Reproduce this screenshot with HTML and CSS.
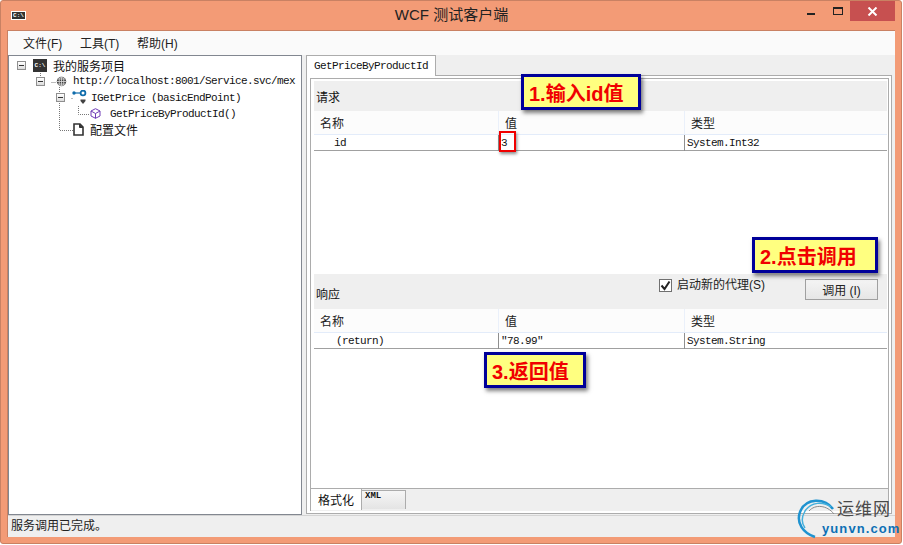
FILE: index.html
```html
<!DOCTYPE html>
<html lang="zh-CN">
<head>
    <meta charset="UTF-8">
    <meta name="viewport" content="width=device-width, initial-scale=1.0">
    <title>WCF 测试客户端</title>
    <link rel="stylesheet" href="styles.css">
</head>
<body>
    <div class="window">
        <div class="titlebar">
            <span class="app-icon">C:\</span>
            <div class="title">WCF 测试客户端</div>
            <div class="controls">
                <span class="ctl-min"></span>
                <span class="ctl-max"></span>
                <span class="ctl-close">
                    <svg width="11" height="9" viewBox="0 0 11 9"><path d="M1.5 0.5 L9.5 8.5 M9.5 0.5 L1.5 8.5" stroke="#fff" stroke-width="2"/></svg>
                </span>
            </div>
        </div>

        <div class="client">
            <div class="menubar">
                <span class="menu-item">文件(F)</span>
                <span class="menu-item">工具(T)</span>
                <span class="menu-item">帮助(H)</span>
            </div>

            <div class="main">
                <div class="tree">
                    <svg class="tree-lines" width="120" height="100" viewBox="0 0 120 100">
                        <path d="M31.5 17 V22 M42.5 26.5 H47 M50.5 31 V38 M63.5 42.5 H62 M50.5 47 V74.5 H64 M69.5 50 V58.5 H80" fill="none" stroke="#777" stroke-dasharray="1 1"/>
                    </svg>
                    <div class="tree-row row-root">
                        <span class="expander"></span>
                        <span class="console-icon">C:\</span>
                        <span class="node-label cjk">我的服务项目</span>
                    </div>
                    <div class="tree-row row-endpoint">
                        <span class="expander"></span>
                        <svg class="node-icon" width="11" height="11" viewBox="0 0 11 11">
                            <circle cx="5.5" cy="5.5" r="4.7" fill="#444"/>
                            <path d="M0.8 5.5 H10.2 M5.5 0.8 V10.2 M1.6 3 H9.4 M1.6 8 H9.4" stroke="#ddd" stroke-width="0.8" fill="none"/>
                            <ellipse cx="5.5" cy="5.5" rx="2.3" ry="4.7" stroke="#ddd" stroke-width="0.8" fill="none"/>
                        </svg>
                        <span class="node-label mono">http://localhost:8001/Service.svc/mex</span>
                    </div>
                    <div class="tree-row row-contract">
                        <span class="expander"></span>
                        <svg class="node-icon" width="15" height="15" viewBox="0 0 15 15">
                            <circle cx="2" cy="3" r="1.7" fill="#0f6cab"/>
                            <path d="M3 3 H8" stroke="#0f6cab" stroke-width="1.2"/>
                            <circle cx="11" cy="3" r="2.4" fill="none" stroke="#0f6cab" stroke-width="1.8"/>
                            <path d="M8.5 9.5 L13.5 9.5 L13.5 11 L11 14 L8.5 11 Z" fill="#424242"/>
                        </svg>
                        <span class="node-label mono">IGetPrice (basicEndPoint)</span>
                    </div>
                    <div class="tree-row row-method">
                        <svg class="node-icon" width="11" height="11" viewBox="0 0 11 11">
                            <path d="M5.5 0.7 L10 3 V8 L5.5 10.3 L1 8 V3 Z M1 3 L5.5 5.5 L10 3 M5.5 5.5 V10.3" fill="#fff" stroke="#6f3bb5" stroke-width="1"/>
                        </svg>
                        <span class="node-label mono">GetPriceByProductId()</span>
                    </div>
                    <div class="tree-row row-config">
                        <svg class="node-icon" width="11" height="13" viewBox="0 0 11 13">
                            <path d="M1 1 H7 L10 4 V12 H1 Z" fill="#fff" stroke="#333" stroke-width="1.6"/>
                            <path d="M6.5 1 V4.5 H10" fill="#333" stroke="#333"/>
                        </svg>
                        <span class="node-label cjk">配置文件</span>
                    </div>
                </div>

                <div class="detail">
                    <div class="tabstrip">
                        <div class="tab mono">GetPriceByProductId</div>
                    </div>
                    <div class="tab-panel">
                        <div class="pane">
                            <div class="pane-body">
                                <div class="section section-request">
                                    <div class="section-head head-request">请求</div>
                                    <div class="grid grid-head">
                                        <div class="cell">名称</div>
                                        <div class="cell">值</div>
                                        <div class="cell">类型</div>
                                    </div>
                                    <div class="grid grid-row">
                                        <div class="cell cell-name mono">id</div>
                                        <div class="cell cell-value mono">3<span class="value-mark"></span></div>
                                        <div class="cell cell-type mono">System.Int32</div>
                                    </div>
                                </div>
                                <div class="section">
                                    <div class="section-head head-response">
                                        <span class="response-title">响应</span>
                                        <label class="check-label">
                                            <span class="checkbox">
                                                <svg width="11" height="11" viewBox="0 0 11 11"><path d="M1.5 5.5 L4.5 9 L9.5 1.5" fill="none" stroke="#222" stroke-width="2"/></svg>
                                            </span>
                                            启动新的代理(S)
                                        </label>
                                        <button class="invoke-btn">调用 (I)</button>
                                    </div>
                                    <div class="grid grid-head">
                                        <div class="cell">名称</div>
                                        <div class="cell">值</div>
                                        <div class="cell">类型</div>
                                    </div>
                                    <div class="grid grid-row">
                                        <div class="cell cell-name cell-return mono">(return)</div>
                                        <div class="cell cell-value mono">"78.99"</div>
                                        <div class="cell cell-type mono">System.String</div>
                                    </div>
                                </div>
                            </div>
                            <div class="bottom-tabs">
                                <div class="btab btab-active">格式化</div>
                                <div class="btab btab-xml">XML</div>
                            </div>
                        </div>
                    </div>
                </div>
            </div>

            <div class="statusbar">服务调用已完成。</div>
        </div>

        <div class="note note-1">1.输入id值</div>
        <div class="note note-2">2.点击调用</div>
        <div class="note note-3">3.返回值</div>

        <div class="watermark">
            <svg class="wm-logo" width="42" height="42" viewBox="0 0 42 42">
                <path d="M36 12 C28 1 9 0 3 15 C-1 26 6 36 18 40" fill="none" stroke="#1f93d0" stroke-width="2.5"/>
                <path d="M34 10 C26 4 14 5 8 14 C4 21 5 27 8 31" fill="none" stroke="#45b0dc" stroke-width="1.5"/>
                <path d="M37 17 C30 8 18 7 12 14" fill="none" stroke="#8a8a8a" stroke-width="1"/>
            </svg>
            <div class="wm-cn">运维网</div>
            <div class="wm-en">yunvn.com</div>
        </div>
    </div>
</body>
</html>
```

FILE: styles.css
```css
* {
    margin: 0;
    padding: 0;
    box-sizing: border-box;
}

body {
    width: 903px;
    height: 545px;
    background: #ffffff;
    overflow: hidden;
    font-family: "Liberation Sans", "Noto Sans CJK SC", sans-serif;
    font-size: 12px;
    color: #111;
}

.mono {
    font-family: "Liberation Mono", "Noto Sans CJK SC", monospace;
    font-size: 11px;
    letter-spacing: -0.6px;
}

.cjk {
    font-size: 12px;
}

.window {
    position: relative;
    width: 902px;
    height: 544px;
    padding: 0 6px 6px 6px;
    background: #f39b76;
    border: 1px solid #c98163;
    border-radius: 3px;
    display: flex;
    flex-direction: column;
}

.titlebar {
    height: 29px;
    flex-shrink: 0;
    display: flex;
    align-items: flex-start;
    position: relative;
}

.app-icon {
    margin: 10px 0 0 4px;
    width: 15px;
    height: 9px;
    background: #333;
    border: 1px solid #fff;
    color: #fff;
    font: bold 6px/7px "Liberation Mono", monospace;
    text-align: center;
}

.title {
    flex: 1;
    text-align: center;
    font-size: 15px;
    line-height: 28px;
    padding-left: 70px;
    color: #222;
}

.controls {
    display: flex;
    align-items: flex-start;
}

.ctl-min {
    width: 8px;
    height: 2px;
    margin: 12px 18px 0 0;
    background: #222;
}

.ctl-max {
    width: 10px;
    height: 8px;
    margin: 6px 7px 0 0;
    border: 1px solid #222;
    border-top-width: 2px;
}

.ctl-close {
    width: 45px;
    height: 20px;
    background: #c75050;
    display: flex;
    align-items: center;
    justify-content: center;
}

.client {
    flex: 1;
    display: flex;
    flex-direction: column;
    background: #efefef;
    border-top: 1px solid #c98163;
    border-left: 1px solid #c98163;
    min-height: 0;
}

.menubar {
    height: 24px;
    flex-shrink: 0;
    background: #fafafa;
    display: flex;
    align-items: center;
    padding: 0 0 2px 15px;
    gap: 16px;
}

.menu-item {
    font-size: 12px;
    width: 41px;
    color: #222;
}

.main {
    flex: 1;
    display: flex;
    gap: 4px;
    min-height: 0;
}

.tree {
    position: relative;
    width: 294px;
    background: #fff;
    border: 1px solid #828790;
    padding-top: 1px;
}

.tree-lines {
    position: absolute;
    left: 0;
    top: 0;
}

.tree-row {
    position: relative;
    height: 16px;
    display: flex;
    align-items: center;
    white-space: nowrap;
}

.row-root { padding-left: 8px; }
.row-endpoint { padding-left: 27px; }
.row-contract { padding-left: 47px; }
.row-method { padding-left: 81px; }
.row-config { padding-left: 64px; }

.expander {
    width: 9px;
    height: 9px;
    flex-shrink: 0;
    border: 1px solid #8f8f8f;
    background: linear-gradient(#ffffff, #dcdcdc);
    position: relative;
}

.expander::after {
    content: '';
    position: absolute;
    left: 1px;
    top: 3px;
    width: 5px;
    height: 1px;
    background: #333;
}

.console-icon {
    margin-left: 7px;
    margin-right: 6px;
    width: 14px;
    height: 13px;
    background: #333;
    color: #fff;
    font: bold 6px/13px "Liberation Mono", monospace;
    text-align: center;
}

.node-icon {
    flex-shrink: 0;
    display: block;
}

.row-endpoint .node-icon { margin: 0 6px 0 11px; }
.row-contract .node-icon { margin: 0 4px 0 7px; }
.row-method .node-icon { margin-right: 9px; }
.row-config .node-icon { margin-right: 6px; }

.node-label {
    color: #111;
}

.row-contract .node-label,
.row-method .node-label {
    padding-top: 2px;
}

.detail {
    flex: 1;
    display: flex;
    flex-direction: column;
    padding-right: 3px;
    min-width: 0;
}

.tabstrip {
    height: 20px;
    flex-shrink: 0;
    display: flex;
    align-items: flex-end;
}

.tab {
    position: relative;
    height: 21px;
    width: 130px;
    margin-bottom: -1px;
    padding: 4px 0 0 7px;
    background: #fff;
    border: 1px solid #acacac;
    border-bottom: none;
    z-index: 1;
}

.tab-panel {
    flex: 1;
    background: #fff;
    border: 1px solid #acacac;
    padding: 2px 2px 2px 3px;
    margin-bottom: 1px;
    min-height: 0;
}

.pane {
    height: 100%;
    border: 1px solid #acacac;
    border-bottom: none;
    display: flex;
    flex-direction: column;
}

.pane-body {
    flex: 1;
    padding: 2px 1px 0 3px;
    border-bottom: 1px solid #acacac;
    background: #fff;
    display: flex;
    flex-direction: column;
    min-height: 0;
}

.section-request {
    height: 193px;
    flex-shrink: 0;
}

.section-head {
    background: #efefef;
}

.head-request {
    height: 30px;
    padding: 7px 0 0 2px;
    font-size: 12px;
}

.head-response {
    height: 35px;
    display: flex;
    align-items: flex-start;
    padding-right: 9px;
}

.response-title {
    margin: 11px auto 0 2px;
}

.check-label {
    margin: 3px 40px 0 0;
    display: flex;
    align-items: center;
    gap: 5px;
    font-size: 12px;
    line-height: 16px;
    color: #222;
}

.checkbox {
    width: 13px;
    height: 13px;
    background: #fff;
    border: 1px solid #707070;
    display: flex;
    align-items: center;
    justify-content: center;
}

.invoke-btn {
    width: 73px;
    height: 21px;
    margin-top: 5px;
    border: 1px solid #a0a0a0;
    background: linear-gradient(#f4f4f4, #e6e6e6);
    font-family: "Liberation Sans", "Noto Sans CJK SC", sans-serif;
    font-size: 12px;
    color: #222;
}

.grid {
    display: grid;
    grid-template-columns: 184px 186px 1fr;
}

.grid-head {
    height: 24px;
    background: #fcfcfc;
    border-bottom: 1px solid #e3ecfa;
}

.grid-head .cell {
    padding: 6px 0 0 6px;
    border-left: 1px solid #eaf0fa;
    font-size: 12px;
    color: #222;
}

.grid-head .cell:first-child {
    border-left: none;
}

.grid-row {
    height: 16px;
    border-bottom: 1px solid #a0a0a0;
}

.cell {
    line-height: 15px;
    white-space: nowrap;
}

.grid-row .cell {
    border-left: 1px solid #8f8f8f;
    padding-left: 2px;
    padding-top: 1px;
}

.grid-row .cell:first-child {
    border-left: none;
}

.grid-row .cell-name {
    padding-left: 20px;
}

.grid-row .cell-return {
    padding-left: 22px;
}

.cell-value {
    position: relative;
}

.value-mark {
    position: absolute;
    left: 0;
    top: -4px;
    width: 17px;
    height: 21px;
    border: 2px solid #f00000;
    box-shadow: 1px 2px 3px rgba(0, 0, 0, 0.45);
}

.bottom-tabs {
    height: 22px;
    flex-shrink: 0;
    background: #efefef;
    display: flex;
    align-items: flex-start;
}

.btab-active {
    width: 51px;
    height: 21px;
    background: #fff;
    border-right: 1px solid #acacac;
    padding: 2px 0 0 7px;
    font-size: 12px;
    line-height: 20px;
}

.btab-xml {
    width: 44px;
    height: 19px;
    margin-top: 1px;
    padding: 0 0 0 3px;
    background: linear-gradient(#f6f6f6, #e4e4e4);
    border: 1px solid #acacac;
    border-left: none;
    border-bottom: none;
    font: bold 9px/11px "Liberation Mono", monospace;
}

.statusbar {
    height: 22px;
    flex-shrink: 0;
    padding-left: 3px;
    background: #efefef;
    border-top: 1px solid #d4d4d4;
    font-size: 12px;
    line-height: 21px;
    color: #222;
}

.note {
    position: absolute;
    display: flex;
    align-items: center;
    padding-left: 5px;
    height: 36px;
    background: #ffff80;
    border: 3px solid #000099;
    box-shadow: 2px 3px 4px rgba(0, 0, 0, 0.5);
    color: #f00000;
    font-weight: bold;
    font-size: 20px;
    white-space: nowrap;
}

.note-1 {
    left: 520px;
    top: 73px;
    width: 120px;
}

.note-2 {
    left: 751px;
    top: 236px;
    width: 126px;
}

.note-3 {
    left: 483px;
    top: 351px;
    width: 102px;
}

.watermark {
    position: absolute;
    left: 796px;
    top: 496px;
    width: 104px;
    height: 44px;
}

.wm-logo {
    position: absolute;
    left: 0;
    top: 0;
}

.wm-cn {
    position: absolute;
    left: 40px;
    top: 3px;
    font-size: 17px;
    line-height: 20px;
    letter-spacing: 1px;
    color: #4a4a4a;
}

.wm-en {
    position: absolute;
    left: 25px;
    top: 25px;
    font-size: 13px;
    line-height: 14px;
    font-weight: bold;
    letter-spacing: 1.1px;
    color: #0d6fb5;
}
```
